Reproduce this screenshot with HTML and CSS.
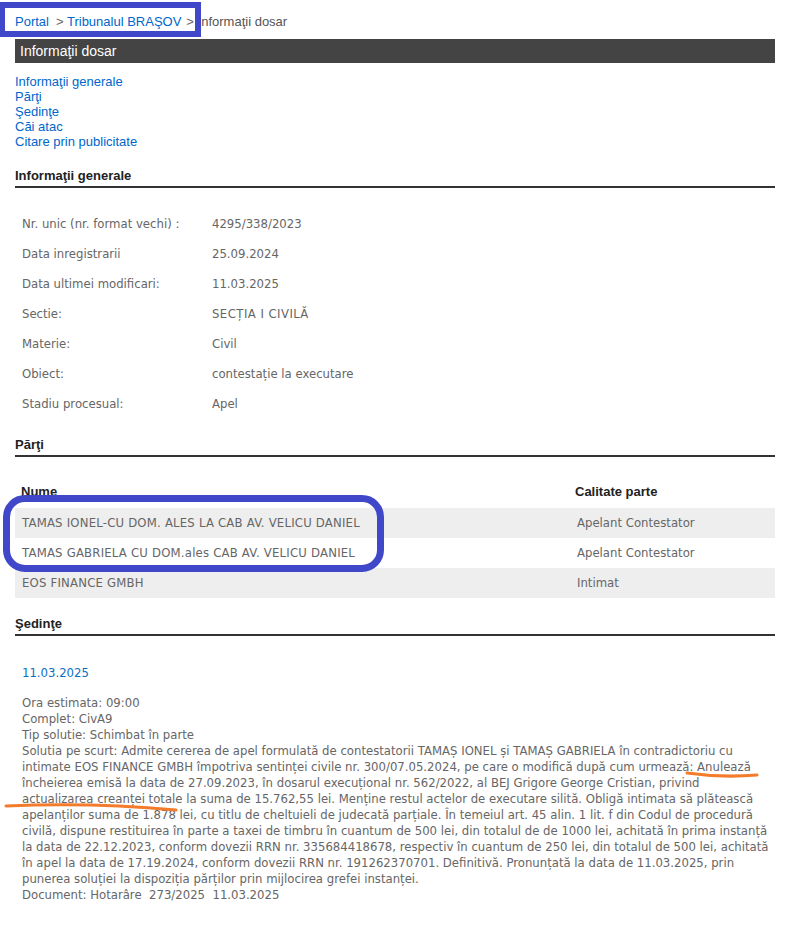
FILE: index.html
```html
<!DOCTYPE html>
<html lang="ro">
<head>
<meta charset="utf-8">
<title>Informaţii dosar</title>
<link rel="stylesheet" href="styles.css">
</head>
<body>
<div class="page">
  <div class="crumbs">
    <a href="#" class="crumb">Portal</a><span class="sep sep-first">&gt;</span> <a href="#" class="crumb">Tribunalul BRAŞOV</a><span class="sep">&gt;</span> <span class="current">Informaţii dosar</span>
  </div>

  <div class="titlebar">Informaţii dosar</div>

  <ul class="toc">
    <li><a href="#">Informaţii generale</a></li>
    <li><a href="#">Părţi</a></li>
    <li><a href="#">Şedinţe</a></li>
    <li><a href="#">Căi atac</a></li>
    <li><a href="#">Citare prin publicitate</a></li>
  </ul>

  <h2 class="section-title first">Informaţii generale</h2>
  <div class="info">
    <div class="info-row"><span class="info-label">Nr. unic (nr. format vechi) :</span><span class="info-value">4295/338/2023</span></div>
    <div class="info-row"><span class="info-label">Data inregistrarii</span><span class="info-value">25.09.2024</span></div>
    <div class="info-row"><span class="info-label">Data ultimei modificari:</span><span class="info-value">11.03.2025</span></div>
    <div class="info-row"><span class="info-label">Sectie:</span><span class="info-value caps-wide">SECȚIA I CIVILĂ</span></div>
    <div class="info-row"><span class="info-label">Materie:</span><span class="info-value">Civil</span></div>
    <div class="info-row"><span class="info-label">Obiect:</span><span class="info-value">contestație la executare</span></div>
    <div class="info-row"><span class="info-label">Stadiu procesual:</span><span class="info-value">Apel</span></div>
  </div>

  <h2 class="section-title">Părţi</h2>
  <div class="parties">
    <div class="parties-head"><span class="p-name">Nume</span><span class="p-role">Calitate parte</span></div>
    <div class="party stripe"><span class="p-name caps">TAMAS IONEL-CU DOM. ALES LA CAB AV. VELICU DANIEL</span><span class="p-role">Apelant Contestator</span></div>
    <div class="party"><span class="p-name caps">TAMAS GABRIELA CU DOM.ales CAB AV. VELICU DANIEL</span><span class="p-role">Apelant Contestator</span></div>
    <div class="party stripe"><span class="p-name caps">EOS FINANCE GMBH</span><span class="p-role">Intimat</span></div>
  </div>

  <h2 class="section-title">Şedinţe</h2>
  <div class="hearing">
    <div class="hearing-date">11.03.2025</div>
    <div class="hearing-body">
      <div>Ora estimata: 09:00</div>
      <div>Complet: CivA9</div>
      <div>Tip solutie: Schimbat în parte</div>
      <div class="solution">Solutia pe scurt: Admite cererea de apel formulată de contestatorii TAMAȘ IONEL și TAMAȘ GABRIELA în contradictoriu cu intimate EOS FINANCE GMBH împotriva sentinței civile nr. 300/07.05.2024, pe care o modifică după cum urmează: Anulează încheierea emisă la data de 27.09.2023, în dosarul execuțional nr. 562/2022, al BEJ Grigore George Cristian, privind actualizarea creanței totale la suma de 15.762,55 lei. Menține restul actelor de executare silită. Obligă intimata să plătească apelanților suma de 1.878 lei, cu titlu de cheltuieli de judecată parțiale. În temeiul art. 45 alin. 1 lit. f din Codul de procedură civilă, dispune restituirea în parte a taxei de timbru în cuantum de 500 lei, din totalul de de 1000 lei, achitată în prima instanță la data de 22.12.2023, conform dovezii RRN nr. 335684418678, respectiv în cuantum de 250 lei, din totalul de 500 lei, achitată în apel la data de 17.19.2024, conform dovezii RRN nr. 191262370701. Definitivă. Pronunțată la data de 11.03.2025, prin punerea soluției la dispoziția părților prin mijlocirea grefei instanței.</div>
      <div>Document: Hotarâre&nbsp; 273/2025&nbsp; 11.03.2025</div>
    </div>
  </div>
</div>

<div class="mark mark-crumb"></div>
<div class="mark mark-parties"></div>
<svg class="scribble" width="804" height="925" viewBox="0 0 804 925">
  <path d="M687 773 Q722 778 757 775" />
  <path d="M6 806 Q90 802 176 810" />
</svg>
</body>
</html>
```

FILE: styles.css
```css
html, body {
  margin: 0;
  padding: 0;
  background: #fff;
}

body {
  position: relative;
  width: 804px;
  min-height: 925px;
  font-family: "Liberation Sans", Arial, sans-serif;
  font-size: 13px;
  color: #333;
}

.page {
  padding-left: 15px;
  width: 760px;
}

a {
  color: #0066cc;
  text-decoration: none;
}

.crumbs {
  margin-top: 13px;
  line-height: 18px;
  height: 18px;
  color: #555;
  white-space: nowrap;
}

.crumbs .sep {
  color: #666;
  margin-left: 5px;
}

.crumbs .sep-first {
  margin-left: 7px;
}

.crumbs .current {
  color: #555;
}

.titlebar {
  margin-top: 8px;
  height: 24px;
  line-height: 24px;
  background: #444;
  color: #fff;
  font-size: 14px;
  padding-left: 5px;
}

.toc {
  list-style: none;
  margin: 11px 0 0;
  padding: 0;
  line-height: 15px;
}

.section-title {
  margin: 18px 0 0;
  font-size: 13px;
  font-weight: bold;
  color: #222;
  line-height: 15px;
  padding-bottom: 3px;
  border-bottom: 2px solid #333;
}

.section-title.first {
  margin-top: 19px;
}

.info,
.parties,
.hearing {
  font-family: "DejaVu Sans", Verdana, sans-serif;
  font-size: 11.7px;
  color: #666;
}

.info {
  margin-top: 21px;
}

.info-row {
  display: flex;
  height: 30px;
  align-items: center;
  padding-left: 7px;
}

.info-label {
  width: 190px;
  flex: none;
}

.caps-wide {
  letter-spacing: 0.45px;
}

.caps {
  letter-spacing: 0.2px;
}

.parties {
  margin-top: 21px;
}

.parties-head,
.party {
  display: flex;
  height: 30px;
  align-items: center;
}

.parties-head {
  font-family: "Liberation Sans", Arial, sans-serif;
  font-size: 13px;
  font-weight: bold;
  color: #222;
  padding-bottom: 4px;
  box-sizing: border-box;
}

.party.stripe {
  background: #eee;
}

.p-name {
  box-sizing: border-box;
  width: 560px;
  flex: none;
  padding-left: 7px;
  white-space: nowrap;
}

.parties-head .p-name {
  padding-left: 6px;
}

.p-role {
  padding-left: 2px;
}

.parties-head .p-role {
  padding-left: 0;
}

.hearing {
  padding-left: 7px;
  line-height: 16px;
}

.hearing-date {
  margin-top: 29px;
  color: #0a6fc2;
  margin-bottom: 14px;
}

.solution {
  width: 750px;
}

.mark {
  position: absolute;
  border: 6px solid #4047c8;
  box-sizing: border-box;
  pointer-events: none;
}

.mark-crumb {
  left: -1px;
  top: 2px;
  width: 202px;
  height: 35px;
}

.mark-parties {
  left: 3px;
  top: 495px;
  width: 381px;
  height: 77px;
  border-width: 7px;
  border-radius: 22px;
}

.scribble {
  position: absolute;
  left: 0;
  top: 0;
  pointer-events: none;
}

.scribble path {
  fill: none;
  stroke: #f47b2a;
  stroke-width: 3;
  stroke-linecap: round;
}
```
